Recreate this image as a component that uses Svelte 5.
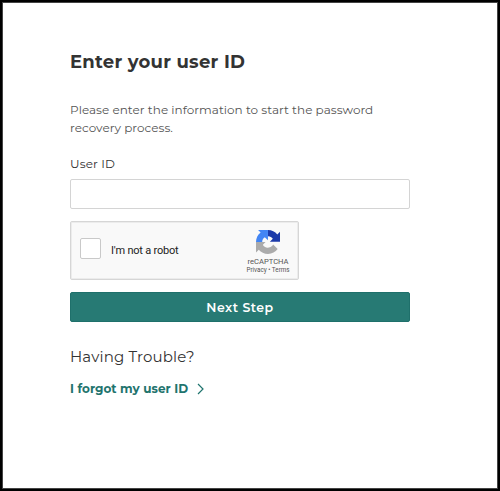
<script lang="ts">
	let userId = '';
	let notRobot = false;
</script>

<main>
	<h1>Enter your user ID</h1>
	<p class="intro">Please enter the information to start the password<br /><span>recovery process.</span></p>
	<form on:submit|preventDefault>
		<label class="field-label" for="user-id">User ID</label>
		<input type="text" id="user-id" bind:value={userId} />
		<div class="captcha">
			<input type="checkbox" id="not-robot" bind:checked={notRobot} />
			<label for="not-robot">I'm not a robot</label>
			<div class="brand">
				<svg viewBox="0 0 64 64" width="24" height="24">
					<path fill="#1c3aa9" d="M64 32V4.500l-7.200 7.200C51 4.600 42 0 32 0v16.500c3 0 6.300.8 8.700 2.500 1.700 1.200 3.100 2.800 4.100 4.600L37 31.500h27z" />
					<path fill="#4285f4" d="M31.900 0H5.500l6.800 6.800C5 12.600 0 21.600 0 32h16.500c0-3 .8-6.200 2.500-8.600 1.200-1.700 2.700-3.200 4.500-4.100L31.900 27z" />
					<path fill="#ababab" d="M0 32v28l7.400-7.400C13.200 59.600 22 64 32 64c10.600 0 20-5.200 25.800-13.100L45.700 38.700c-1.200 2.200-2.900 4.100-4.900 5.500-2.100 1.700-5.100 3-9.200 3-6.800-.5-11.200-3.200-13.300-8L25.500 32z" />
				</svg>
				<span class="name">reCAPTCHA</span>
				<span class="terms">Privacy • Terms</span>
			</div>
		</div>
		<button type="submit">Next Step</button>
	</form>
	<h2>Having Trouble?</h2>
	<a href="#forgot">
		<span>I forgot my user ID</span>
		<svg viewBox="0 0 7 12" width="7" height="12">
			<path d="M1 1l5 5-5 5" fill="none" stroke="currentColor" stroke-width="1.2" />
		</svg>
	</a>
</main>

<style>
	:global(body) {
		margin: 0;
	}

	main {
		box-sizing: border-box;
		width: 500px;
		height: 491px;
		padding: 47px 88px 0 68px;
		border: 2px solid #000;
		outline: 1px solid #444;
		outline-offset: -3px;
		background: #fff;
		color: #333;
		font-family: Montserrat, Inter, sans-serif;
	}

	h1 {
		margin: 0 0 26px;
		font-size: 18px;
		font-weight: 700;
		line-height: 26px;
		letter-spacing: 0.25px;
		white-space: nowrap;
	}

	.intro {
		margin: 0;
		color: #555;
		font-size: 12px;
		line-height: 18px;
		letter-spacing: 0.03px;
		white-space: nowrap;
	}

	form {
		display: flex;
		flex-direction: column;
		margin-top: 18px;
	}

	.field-label {
		font-size: 12px;
		line-height: 18px;
		letter-spacing: 0.15px;
		align-self: flex-start;
	}

	input[type='text'] {
		box-sizing: border-box;
		width: 340px;
		height: 30px;
		margin: 6px 0 12px;
		padding: 0 8px;
		border: 1px solid #d4d4d4;
		border-radius: 2px;
		font: inherit;
		font-size: 12px;
	}

	.captcha {
		box-sizing: border-box;
		display: flex;
		align-items: center;
		width: 229px;
		height: 59px;
		margin-bottom: 12px;
		padding: 0 7px 0 9px;
		border: 1px solid #d6d6d6;
		border-radius: 2px;
		box-shadow: inset 0 0 0 1px #ececec;
		background: #f9f9f9;
		color: #222;
		font-family: Roboto, sans-serif;
	}

	.captcha input {
		appearance: none;
		box-sizing: border-box;
		width: 21px;
		height: 21px;
		margin: 0 10px 4px 0;
		border: 1px solid #c9c9c9;
		border-radius: 2px;
		background: #fff;
	}

	.captcha label {
		font-size: 11px;
		letter-spacing: -0.2px;
	}

	.brand {
		display: flex;
		flex-direction: column;
		align-items: center;
		width: 46px;
		margin: 4px 0 0 auto;
		color: #555;
		white-space: nowrap;
	}

	.name {
		margin-top: 3px;
		font-size: 7.600px;
		line-height: 9px;
	}

	.terms {
		font-size: 6.300px;
		line-height: 9px;
	}

	button {
		width: 340px;
		height: 30px;
		padding: 0;
		border: 1px solid #1f706b;
		border-radius: 2px;
		background: #277a74;
		color: #fff;
		font: inherit;
		font-size: 12.500px;
		font-weight: 600;
		letter-spacing: 0.5px;
	}

	h2 {
		margin: 24px 0 12px;
		font-size: 15px;
		font-weight: 400;
		line-height: 22px;
		letter-spacing: 0.15px;
	}

	a {
		display: flex;
		align-items: center;
		gap: 9px;
		color: #1f746e;
		font-size: 12px;
		font-weight: 700;
		line-height: 18px;
		letter-spacing: 0.04px;
		text-decoration: none;
		white-space: nowrap;
	}
</style>
